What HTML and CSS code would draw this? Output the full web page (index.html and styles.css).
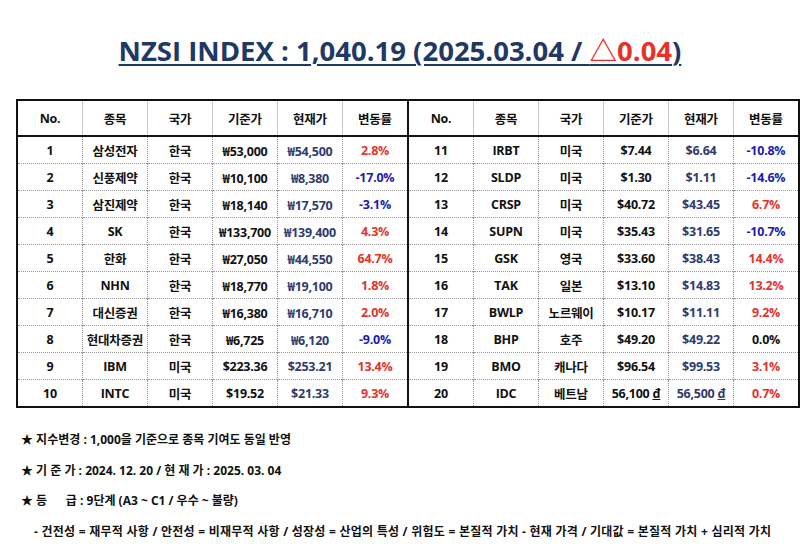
FILE: index.html
```html
<!DOCTYPE html>
<html lang="ko">
<head>
<meta charset="utf-8">
<title>NZSI INDEX</title>
<link rel="stylesheet" href="styles.css">
</head>
<body>
<h1 class="title">NZSI INDEX : 1,040.19 (2025.03.04 / <span class="up">△0.04</span>)</h1>
<table class="idx">
<thead>
<tr>
<th>No.</th><th>종목</th><th>국가</th><th>기준가</th><th>현재가</th><th>변동률</th>
<th class="mid">No.</th><th>종목</th><th>국가</th><th>기준가</th><th>현재가</th><th>변동률</th>
</tr>
</thead>
<tbody>
<tr><td>1</td><td>삼성전자</td><td>한국</td><td>₩53,000</td><td class="cur">₩54,500</td><td class="up">2.8%</td>
<td class="mid">11</td><td>IRBT</td><td>미국</td><td>$7.44</td><td class="cur">$6.64</td><td class="dn">-10.8%</td></tr>
<tr><td>2</td><td>신풍제약</td><td>한국</td><td>₩10,100</td><td class="cur">₩8,380</td><td class="dn">-17.0%</td>
<td class="mid">12</td><td>SLDP</td><td>미국</td><td>$1.30</td><td class="cur">$1.11</td><td class="dn">-14.6%</td></tr>
<tr><td>3</td><td>삼진제약</td><td>한국</td><td>₩18,140</td><td class="cur">₩17,570</td><td class="dn">-3.1%</td>
<td class="mid">13</td><td>CRSP</td><td>미국</td><td>$40.72</td><td class="cur">$43.45</td><td class="up">6.7%</td></tr>
<tr><td>4</td><td>SK</td><td>한국</td><td>₩133,700</td><td class="cur">₩139,400</td><td class="up">4.3%</td>
<td class="mid">14</td><td>SUPN</td><td>미국</td><td>$35.43</td><td class="cur">$31.65</td><td class="dn">-10.7%</td></tr>
<tr><td>5</td><td>한화</td><td>한국</td><td>₩27,050</td><td class="cur">₩44,550</td><td class="up">64.7%</td>
<td class="mid">15</td><td>GSK</td><td>영국</td><td>$33.60</td><td class="cur">$38.43</td><td class="up">14.4%</td></tr>
<tr><td>6</td><td>NHN</td><td>한국</td><td>₩18,770</td><td class="cur">₩19,100</td><td class="up">1.8%</td>
<td class="mid">16</td><td>TAK</td><td>일본</td><td>$13.10</td><td class="cur">$14.83</td><td class="up">13.2%</td></tr>
<tr><td>7</td><td>대신증권</td><td>한국</td><td>₩16,380</td><td class="cur">₩16,710</td><td class="up">2.0%</td>
<td class="mid">17</td><td>BWLP</td><td>노르웨이</td><td>$10.17</td><td class="cur">$11.11</td><td class="up">9.2%</td></tr>
<tr><td>8</td><td>현대차증권</td><td>한국</td><td>₩6,725</td><td class="cur">₩6,120</td><td class="dn">-9.0%</td>
<td class="mid">18</td><td>BHP</td><td>호주</td><td>$49.20</td><td class="cur">$49.22</td><td>0.0%</td></tr>
<tr><td>9</td><td>IBM</td><td>미국</td><td>$223.36</td><td class="cur">$253.21</td><td class="up">13.4%</td>
<td class="mid">19</td><td>BMO</td><td>캐나다</td><td>$96.54</td><td class="cur">$99.53</td><td class="up">3.1%</td></tr>
<tr><td>10</td><td>INTC</td><td>미국</td><td>$19.52</td><td class="cur">$21.33</td><td class="up">9.3%</td>
<td class="mid">20</td><td>IDC</td><td>베트남</td><td>56,100 <u>đ</u></td><td class="cur">56,500 <u>đ</u></td><td class="up">0.7%</td></tr>
</tbody>
</table>
<div class="notes">
<p>★ 지수변경 : 1,000을 기준으로 종목 기여도 동일 반영</p>
<p>★ 기 준 가 : 2024. 12. 20 / 현 재 가 : 2025. 03. 04</p>
<p>★ 등      급 : 9단계 (A3 ~ C1 / 우수 ~ 불량)</p>
<p class="sub">- 건전성 = 재무적 사항 / 안전성 = 비재무적 사항 / 성장성 = 산업의 특성 / 위험도 = 본질적 가치 - 현재 가격 / 기대값 = 본질적 가치 + 심리적 가치</p>
</div>
</body>
</html>
```
FILE: styles.css
```css
html, body {
  margin: 0;
  padding: 0;
  background: #ffffff;
}
body {
  font-family: "Open Sans", "Noto Sans CJK KR", sans-serif;
  color: #111111;
  width: 800px;
}
.title {
  margin: 0;
  padding-top: 32px;
  height: 99px;
  box-sizing: border-box;
  text-align: center;
  font-size: 27.5px;
  line-height: 38px;
  font-weight: 700;
  color: #1f3864;
  text-decoration: underline;
  text-decoration-thickness: 2px;
  text-underline-offset: 3px;
}
.title .up {
  color: #e8302a;
}
.idx {
  margin-left: 16px;
  width: 768px;
  border-collapse: collapse;
  table-layout: fixed;
  border: 2px solid #111111;
  font-size: 12.5px;
  font-weight: 700;
  letter-spacing: -0.25px;
}
.idx th, .idx td {
  width: 64px;
  padding: 0;
  text-align: center;
  white-space: nowrap;
  overflow: hidden;
}
.idx th {
  height: 34px;
  font-weight: 700;
  border-left: 1px solid #c8c8c8;
  border-bottom: 2px solid #111111;
}
.idx td {
  height: 26px;
  border-left: 1px dotted #9a9a9a;
  border-top: 1px dotted #9a9a9a;
}
.idx tbody tr:first-child td {
  border-top: none;
}
.idx .mid {
  border-left: 2px solid #111111;
}
.idx th:first-child, .idx td:first-child {
  border-left: none;
}
.idx .cur {
  color: #2f3c6c;
}
.idx .up {
  color: #e3332b;
}
.idx .dn {
  color: #1c1cb0;
}
.notes {
  margin-top: 17px;
  padding-left: 21px;
  font-size: 12px;
  font-weight: 700;
}
.notes p {
  margin: 0;
  line-height: 30.6px;
  white-space: pre;
}
.notes .sub {
  padding-left: 13px;
  letter-spacing: 0.25px;
}
```
